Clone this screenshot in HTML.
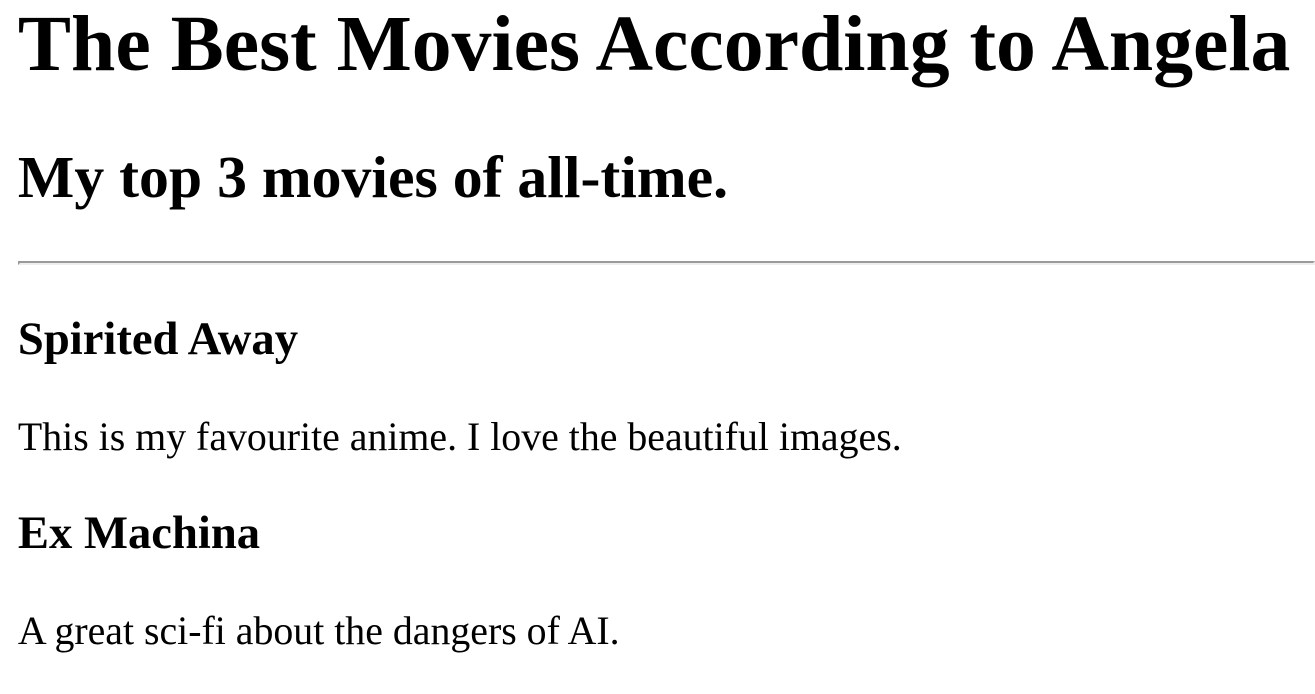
<!DOCTYPE html>
<html><head><meta charset="utf-8"><style>
html{zoom:2.49}
body{margin:0 0 8px 7.2px;font-family:"Liberation Serif",serif;color:#000;background:#fff}
h1{margin-top:-0.6px}
</style></head><body>
<h1>The Best Movies According to Angela</h1>
<h2>My top 3 movies of all-time.</h2>
<hr>
<h3>Spirited Away</h3>
<p>This is my favourite anime. I love the beautiful images.</p>
<h3>Ex Machina</h3>
<p>A great sci-fi about the dangers of AI.</p>
</body></html>
